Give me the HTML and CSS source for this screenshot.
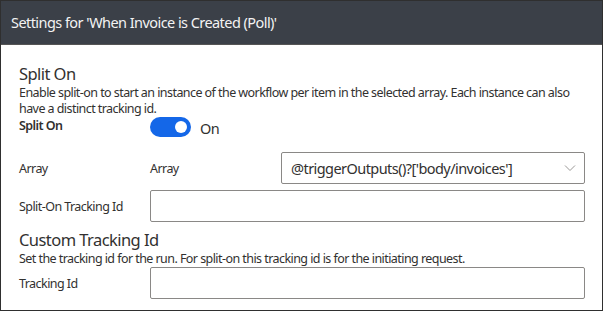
FILE: index.html
```html
<!DOCTYPE html>
<html lang="en">
<head>
    <meta charset="UTF-8">
    <title>Settings</title>
    <link rel="stylesheet" href="styles.css">
</head>
<body>
    <div class="panel">
        <div class="panel-header">Settings for 'When Invoice is Created (Poll)'</div>
        <div class="panel-body">
            <div class="section">
                <h2>Split On</h2>
                <p class="desc">Enable split-on to start an instance of the workflow per item in the selected array. Each instance can also have a distinct tracking id.</p>
                <div class="toggle-row">
                    <span class="toggle-label">Split On</span>
                    <span class="toggle"><span class="knob"></span></span>
                    <span class="toggle-text">On</span>
                </div>
                <div class="field-row array-row">
                    <span class="field-label">Array</span>
                    <span class="field-label sub">Array</span>
                    <div class="select">
                        <span>@triggerOutputs()?['body/invoices']</span>
                        <svg width="12" height="8" viewBox="0 0 12 8"><path d="M1 1.5 L6 6.5 L11 1.5" fill="none" stroke="#9a9896" stroke-width="1"/></svg>
                    </div>
                </div>
                <div class="field-row">
                    <span class="field-label">Split-On Tracking Id</span>
                    <input class="text-input" type="text">
                </div>
            </div>
            <div class="section second">
                <h2>Custom Tracking Id</h2>
                <p class="desc">Set the tracking id for the run. For split-on this tracking id is for the initiating request.</p>
                <div class="field-row flush">
                    <span class="field-label">Tracking Id</span>
                    <input class="text-input" type="text">
                </div>
            </div>
        </div>
    </div>
</body>
</html>
```

FILE: styles.css
```css
body {
    margin: 0;
    font-family: "Noto Sans", "Open Sans", sans-serif;
    letter-spacing: -0.035em;
    color: #323130;
    background: #fff;
}
.panel {
    width: 601px;
    height: 309px;
    border: 1px solid #2f2f2f;
    overflow: hidden;
}
.panel-header {
    background: #3b4048;
    color: #f3f3f3;
    height: 43px;
    line-height: 43px;
    padding-left: 10px;
    font-size: 14.5px;
    border-bottom: 1px solid #555;
}
.panel-body {
    padding: 18px 17px 0 18px;
}
h2 {
    margin: 0;
    font-size: 16.5px;
    font-weight: 400;
    line-height: 22px;
}
.desc {
    margin: 0;
    font-size: 12.5px;
    line-height: 16px;
}
.toggle-row {
    display: flex;
    align-items: flex-start;
    height: 20px;
}
.toggle-label {
    width: 131px;
    font-size: 12.5px;
    font-weight: 600;
    line-height: 18px;
}
.toggle {
    width: 41px;
    height: 20px;
    border-radius: 10px;
    background: #1467e8;
    position: relative;
}
.knob {
    position: absolute;
    right: 4px;
    top: 4px;
    width: 12px;
    height: 12px;
    border-radius: 50%;
    background: #fff;
}
.toggle-text {
    margin-left: 9px;
    font-size: 14.5px;
    line-height: 22px;
}
.field-row {
    display: flex;
    align-items: center;
    margin-top: 6px;
}
.array-row {
    margin-top: 15px;
}
.field-row.flush {
    margin-top: 0;
}
.field-label {
    width: 131px;
    font-size: 12.5px;
    flex-shrink: 0;
}
.select {
    flex: 1;
    height: 32px;
    box-sizing: border-box;
    border: 1px solid #8a8886;
    border-radius: 2px;
    display: flex;
    align-items: center;
    justify-content: space-between;
    padding: 0 8px 0 9px;
    font-size: 14.5px;
}
.text-input {
    flex: 1;
    height: 32px;
    box-sizing: border-box;
    border: 1px solid #8a8886;
    border-radius: 2px;
    margin: 0;
    padding: 0 8px;
}
.section.second {
    margin-top: 7px;
}
```
